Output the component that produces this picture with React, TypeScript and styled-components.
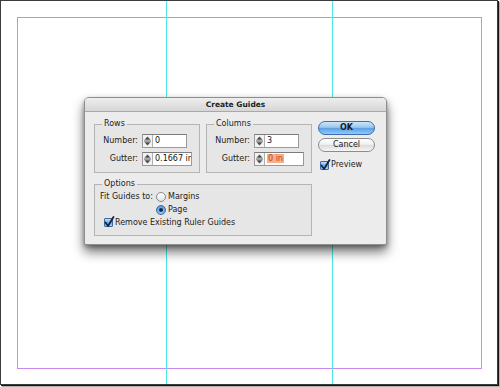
import React from 'react';
import styled, { createGlobalStyle } from 'styled-components';

const Global = createGlobalStyle`
  html, body { margin: 0; padding: 0; background: #ffffff; }
  body {
    width: 500px; height: 387px; overflow: hidden;
    font-family: "DejaVu Sans", "Liberation Sans", sans-serif;
    color: #1c1c1c;
  }
  * { box-sizing: border-box; }
`;

const Frame = styled.div`
  position: relative;
  width: 498px;
  height: 385px;
  border: 1px solid #3c3c3c;
  background: #ffffff;
  box-shadow: 1px 1px 0 #151515, 2px 2px 1px rgba(0, 0, 0, 0.3);
  overflow: hidden;
`;

const MarginBox = styled.div`
  position: absolute;
  left: 16px;
  top: 16px;
  width: 465px;
  height: 352px;
  border: 1px solid #cc88ee;
`;

const Guide = styled.div<{ $x: number }>`
  position: absolute;
  top: 0;
  bottom: 0;
  left: ${(p) => p.$x}px;
  width: 1px;
  background: #4fe6e6;
`;

const Dialog = styled.div`
  position: absolute;
  left: 83px;
  top: 96px;
  width: 303px;
  height: 148px;
  border: 1px solid #8e8e8e;
  border-radius: 5px 5px 2px 2px;
  background: #ececec;
  box-shadow: 0 7px 12px rgba(0, 0, 0, 0.55), 0 2px 4px rgba(0, 0, 0, 0.3);
  display: flex;
  flex-direction: column;
`;

const TitleBar = styled.div`
  height: 14px;
  flex: none;
  border-radius: 4px 4px 0 0;
  border-bottom: 1px solid #a9a9a9;
  background: linear-gradient(to bottom, #eeeeee, #d6d6d6);
  font-size: 7.5px;
  font-weight: bold;
  line-height: 13px;
  text-align: center;
  color: #222;
`;

const Body = styled.div`
  display: grid;
  grid-template-columns: 106px 106px 57px;
  grid-template-rows: auto auto;
  column-gap: 6px;
  row-gap: 6px;
  padding: 7px 0 0 9px;
  align-items: start;
`;

const Group = styled.fieldset<{ $span?: number; $padTop?: number }>`
  margin: 0;
  padding: ${(p) => p.$padTop ?? 5}px 0 6px 0;
  border: 1px solid #b4b4b4;
  background: #e6e6e6;
  min-width: 0;
  grid-column: span ${(p) => p.$span ?? 1};
`;

const Legend = styled.legend`
  margin-left: 7px;
  padding: 0 2px;
  font-size: 8px;
  line-height: 10px;
  color: #1c1c1c;
`;

const FieldRows = styled.div`
  display: flex;
  flex-direction: column;
  gap: 4px;
`;

const FieldRow = styled.div`
  display: flex;
  align-items: center;
`;

const Label = styled.span`
  width: 43px;
  margin-right: 4px;
  text-align: right;
  font-size: 8px;
  line-height: 10px;
  white-space: nowrap;
`;

const Field = styled.div<{ $w: number }>`
  width: ${(p) => p.$w}px;
  height: 14px;
  display: flex;
  align-items: stretch;
  background: #ffffff;
  border: 1px solid #9a9a9a;
  border-top-color: #7c7c7c;
  overflow: hidden;
`;

const Stepper = styled.div`
  width: 10px;
  flex: none;
  display: flex;
  align-items: center;
  justify-content: center;
  background: #f2f2f2;
  border-right: 1px solid #b0b0b0;
`;

const FieldText = styled.span`
  padding-left: 2px;
  font-size: 8px;
  line-height: 12px;
  white-space: nowrap;
  color: #111;
`;

const Highlight = styled.span`
  background: #f7ac8a;
  color: #b24a1c;
  padding: 0 1px;
`;

const ButtonCol = styled.div`
  display: flex;
  flex-direction: column;
  padding-top: 2px;
`;

const AquaButton = styled.div<{ $primary?: boolean }>`
  height: 14px;
  border-radius: 7px;
  border: 1px solid ${(p) => (p.$primary ? '#3c6fae' : '#8c8c8c')};
  background: ${(p) =>
    p.$primary
      ? 'linear-gradient(to bottom, #cfe6fb 0%, #97c6f1 45%, #5e9fe4 52%, #8fcaf8 100%)'
      : 'linear-gradient(to bottom, #ffffff 0%, #f0f0f0 45%, #dcdcdc 52%, #f6f6f6 100%)'};
  font-size: 8px;
  line-height: 12px;
  text-align: center;
  color: #1a1a1a;
  font-weight: ${(p) => (p.$primary ? 'bold' : 'normal')};
  & + & { margin-top: 3px; }
`;

const CheckRow = styled.div<{ $indent?: number; $top?: number }>`
  display: flex;
  align-items: center;
  gap: 2px;
  padding-left: ${(p) => p.$indent ?? 0}px;
  margin-top: ${(p) => p.$top ?? 0}px;
  font-size: 8px;
  line-height: 10px;
  white-space: nowrap;
`;

const CheckBox = styled.span`
  width: 9px;
  height: 9px;
  flex: none;
  position: relative;
  border: 1px solid #3d6aa3;
  border-radius: 1px;
  background: linear-gradient(to bottom, #c6e0fa, #6aa6e6 55%, #a9d3f8);
`;

const CheckMark = styled.svg`
  position: absolute;
  left: -1px;
  top: -3px;
`;

const Radio = styled.span<{ $on?: boolean }>`
  width: 10px;
  height: 10px;
  flex: none;
  border-radius: 50%;
  display: flex;
  align-items: center;
  justify-content: center;
  border: 1px solid ${(p) => (p.$on ? '#3d6aa3' : '#8a8a8a')};
  background: ${(p) =>
    p.$on
      ? 'radial-gradient(circle at 50% 70%, #a9d3f8, #5f9de2 70%)'
      : 'linear-gradient(to bottom, #ffffff, #e2e2e2)'};
`;

const Dot = styled.span`
  width: 4px;
  height: 4px;
  border-radius: 50%;
  background: #102a4a;
`;

const OptionsGrid = styled.div`
  display: grid;
  grid-template-columns: 56px auto;
  grid-auto-rows: 13px;
  align-items: center;
  padding: 0 0 0 5px;
`;

const OptLabel = styled.span`
  font-size: 8px;
  line-height: 10px;
  white-space: nowrap;
`;

const Full = styled.div`
  grid-column: 1 / span 2;
`;

const StepIcon = () => (
  <svg width="7" height="10" viewBox="0 0 7 10">
    <path d="M3.5 0.5 L6.5 3.8 L0.5 3.8 Z" fill="#4a4a4a" />
    <rect x="0" y="4.6" width="7" height="0.9" fill="#4a4a4a" />
    <path d="M3.5 9.5 L6.5 6.2 L0.5 6.2 Z" fill="#4a4a4a" />
  </svg>
);

const Check = () => (
  <CheckBox>
    <CheckMark width="11" height="12" viewBox="0 0 11 12">
      <path d="M1.5 6.5 L4 10 L9.5 1" stroke="#14263d" strokeWidth="1.8" fill="none" strokeLinecap="round" strokeLinejoin="round" />
    </CheckMark>
  </CheckBox>
);

const NumberField = ({ label, width, children }: { label: string; width: number; children: React.ReactNode }) => (
  <FieldRow>
    <Label>{label}</Label>
    <Field $w={width}>
      <Stepper>
        <StepIcon />
      </Stepper>
      <FieldText>{children}</FieldText>
    </Field>
  </FieldRow>
);

export default function App() {
  return (
    <>
      <Global />
      <Frame>
        <MarginBox />
        <Guide $x={165} />
        <Guide $x={331} />
        <Dialog>
          <TitleBar>Create Guides</TitleBar>
          <Body>
            <Group>
              <Legend>Rows</Legend>
              <FieldRows>
                <NumberField label="Number:" width={45}>0</NumberField>
                <NumberField label="Gutter:" width={50}>0.1667 in</NumberField>
              </FieldRows>
            </Group>
            <Group>
              <Legend>Columns</Legend>
              <FieldRows>
                <NumberField label="Number:" width={45}>3</NumberField>
                <NumberField label="Gutter:" width={50}>
                  <Highlight>0 in</Highlight>
                </NumberField>
              </FieldRows>
            </Group>
            <ButtonCol>
              <AquaButton $primary>OK</AquaButton>
              <AquaButton>Cancel</AquaButton>
              <CheckRow $indent={2} $top={8}>
                <Check />
                Preview
              </CheckRow>
            </ButtonCol>
            <Group $span={2} $padTop={1}>
              <Legend>Options</Legend>
              <OptionsGrid>
                <OptLabel>Fit Guides to:</OptLabel>
                <CheckRow>
                  <Radio />
                  Margins
                </CheckRow>
                <span />
                <CheckRow>
                  <Radio $on>
                    <Dot />
                  </Radio>
                  Page
                </CheckRow>
                <Full>
                  <CheckRow $indent={4}>
                    <Check />
                    Remove Existing Ruler Guides
                  </CheckRow>
                </Full>
              </OptionsGrid>
            </Group>
          </Body>
        </Dialog>
      </Frame>
    </>
  );
}
